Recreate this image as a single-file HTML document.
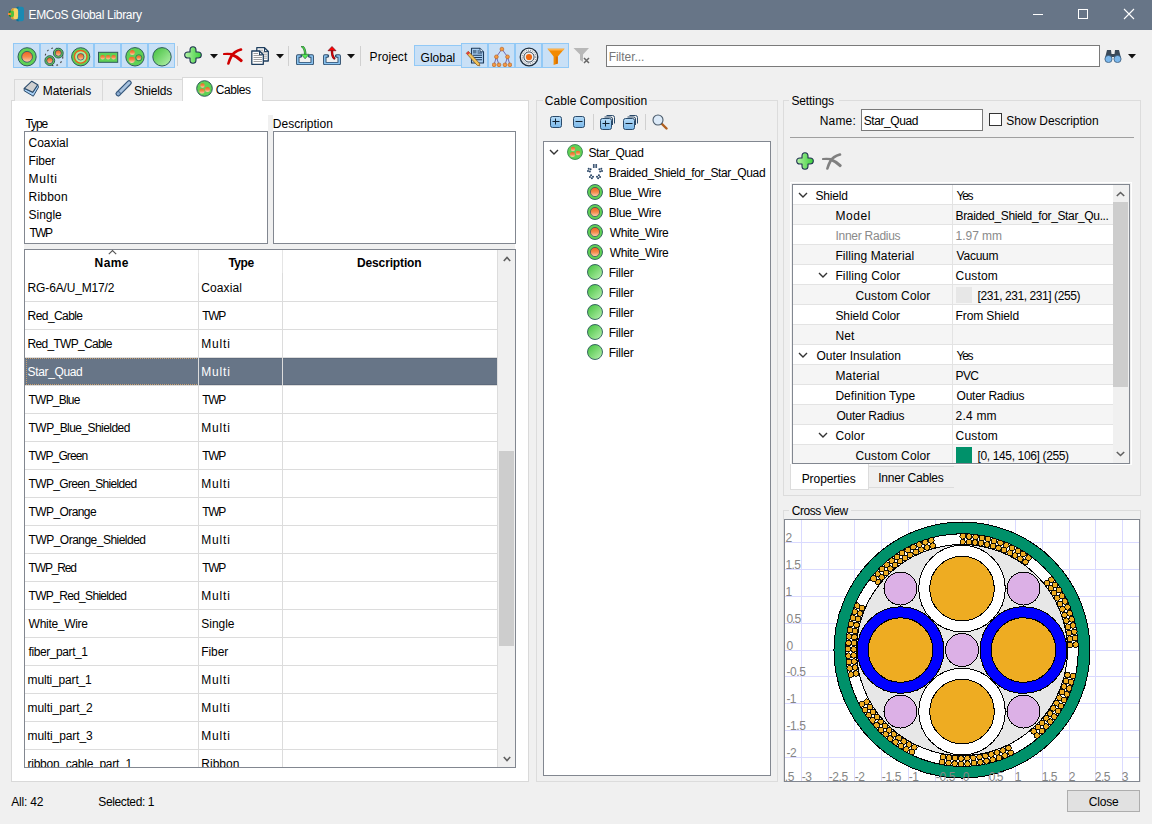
<!DOCTYPE html><html><head><meta charset="utf-8"><style>
html,body{margin:0;padding:0;}
body{width:1152px;height:824px;position:relative;overflow:hidden;background:#f0f0f0;font-family:"Liberation Sans", sans-serif;font-size:12px;color:#000;}
.t{position:absolute;white-space:nowrap;line-height:14px;}
svg{display:block}

</style></head><body>
<svg width="0" height="0" style="position:absolute">
<defs>
<linearGradient id="gOr" x1="0" y1="0" x2="0" y2="1"><stop offset="0" stop-color="#ec6420"/><stop offset="0.5" stop-color="#f48a4a"/><stop offset="1" stop-color="#fcd2b4"/></linearGradient>
<linearGradient id="gGr2" x1="0" y1="0" x2="1" y2="1"><stop offset="0" stop-color="#3fbf3a"/><stop offset="1" stop-color="#b9f2b0"/></linearGradient>
<linearGradient id="gPlus" x1="0" y1="0" x2="1" y2="0"><stop offset="0" stop-color="#b4f2a6"/><stop offset="1" stop-color="#3ccf3c"/></linearGradient>
<linearGradient id="gBl" x1="0" y1="0" x2="0" y2="1"><stop offset="0" stop-color="#b5dbf7"/><stop offset="1" stop-color="#7ab8ea"/></linearGradient>
</defs></svg>
<div style="position:absolute;left:0px;top:0px;width:1152px;height:30px;background:#677587"></div>
<svg style="position:absolute;left:8px;top:6px;" width="17" height="16" viewBox="0 0 17 16"><path d="M10 0.7 L13.5 0.7 Q16 0.7 16 4 L16 12 Q16 15.2 13.5 15.2 L10 15.2 Q8 15.2 8 12 L8 4 Q8 0.7 10 0.7 Z" fill="#1a8ab2"/>
<path d="M10 0.7 Q8 0.7 8 4 L8 12 Q8 15.2 10 15.2 L10.8 15.2 Q9.5 13 9.5 8 Q9.5 3 10.8 0.7 Z" fill="#0f6e92"/>
<path d="M5 2.3 L8.5 2.3 Q10.1 2.3 10.1 5 L10.1 10.6 Q10.1 13.3 8.5 13.3 L5 13.3 Q3.2 13.3 3.2 10.6 L3.2 5 Q3.2 2.3 5 2.3 Z" fill="#f6d466"/>
<path d="M5 2.3 Q3.2 2.3 3.2 5 L3.2 10.6 Q3.2 13.3 5 13.3 L6 13.3 Q5 11 5 7.8 Q5 4.5 6 2.3 Z" fill="#d8982e"/>
<path d="M2.5 4.7 L5 4.7 Q6 4.7 6 7 L6 8.8 Q6 10.9 5 10.9 L2.5 10.9 Q0.8 10.9 0.8 8.8 L0.8 7 Q0.8 4.7 2.5 4.7 Z" fill="#52c03e"/>
<path d="M2.5 4.7 Q0.8 4.7 0.8 7 L0.8 8.8 Q0.8 10.9 2.5 10.9 L3 10.9 Q2.2 9.5 2.2 7.8 Q2.2 6 3 4.7 Z" fill="#1e7a22"/>
<rect x="0" y="6.9" width="3.1" height="2.1" fill="#f28a30"/></svg>
<div class="t" style="left:28.50px;top:8px;letter-spacing:-0.316px;color:#fff">EMCoS Global Library</div>
<div style="position:absolute;left:1033px;top:14px;width:10px;height:1px;background:#fff"></div>
<div style="position:absolute;left:1078px;top:9px;width:10px;height:10px;border:1px solid #fff;box-sizing:border-box"></div>
<svg style="position:absolute;left:1123px;top:8px;" width="12" height="12" viewBox="0 0 12 12"><path d="M1 1 L11 11 M11 1 L1 11" stroke="#fff" stroke-width="1.1"/></svg>
<div style="position:absolute;left:13px;top:43px;width:162px;height:25px;background:#c9e0f6;border:1px solid #92c9f6;box-sizing:border-box"></div>
<div style="position:absolute;left:39px;top:43px;width:2px;height:25px;background:#92c9f6"></div>
<div style="position:absolute;left:66px;top:43px;width:2px;height:25px;background:#92c9f6"></div>
<div style="position:absolute;left:93px;top:43px;width:2px;height:25px;background:#92c9f6"></div>
<div style="position:absolute;left:120px;top:43px;width:2px;height:25px;background:#92c9f6"></div>
<div style="position:absolute;left:147px;top:43px;width:2px;height:25px;background:#92c9f6"></div>
<svg style="position:absolute;left:17px;top:47px;" width="20" height="20" viewBox="0 0 20 20"><circle cx="10.1" cy="9.8" r="9.1" fill="#5fd155" stroke="#2d5a5a" stroke-width="1"/><circle cx="10.1" cy="9.8" r="5.4" fill="url(#gOr)" stroke="#2d4a6a" stroke-width="0.8"/></svg>
<svg style="position:absolute;left:44px;top:47px;" width="20" height="20" viewBox="0 0 20 20"><circle cx="10" cy="9.8" r="8.8" fill="none" stroke="#444" stroke-width="1.1" stroke-dasharray="1.8 3"/><circle cx="14.3" cy="6.1" r="4.9" fill="#5fd155" stroke="#2d5a5a" stroke-width="1"/><circle cx="14.3" cy="6.1" r="3.1" fill="url(#gOr)" stroke="#2d4a6a" stroke-width="0.8"/><circle cx="5.8" cy="13.6" r="4.9" fill="#5fd155" stroke="#2d5a5a" stroke-width="1"/><circle cx="5.8" cy="13.6" r="3.1" fill="url(#gOr)" stroke="#2d4a6a" stroke-width="0.8"/></svg>
<svg style="position:absolute;left:71px;top:47px;" width="20" height="20" viewBox="0 0 20 20"><circle cx="9.7" cy="9.8" r="9.1" fill="#5fd155" stroke="#2d5a5a" stroke-width="1"/><circle cx="9.7" cy="9.8" r="6.3" fill="#a8f0a0" stroke="#e8601a" stroke-width="1.4"/><circle cx="9.7" cy="9.8" r="3.3" fill="url(#gOr)" stroke="#2d4a6a" stroke-width="0.7"/></svg>
<svg style="position:absolute;left:98px;top:51px;" width="21" height="13" viewBox="0 0 21 13"><rect x="0.5" y="1.3" width="19.2" height="10" fill="#5fd155" stroke="#2d5a5a" stroke-width="1"/><circle cx="4.6" cy="6.3" r="2.3" fill="url(#gOr)"/><circle cx="10.1" cy="6.3" r="2.3" fill="url(#gOr)"/><circle cx="15.6" cy="6.3" r="2.3" fill="url(#gOr)"/></svg>
<svg style="position:absolute;left:125px;top:47px;" width="20" height="20" viewBox="0 0 20 20"><circle cx="10" cy="9.8" r="9.2" fill="#5fd155" stroke="#2d5a5a" stroke-width="1"/><circle cx="7.3" cy="5.6" r="2.5" fill="url(#gOr)"/><circle cx="6.8" cy="12.8" r="3.1" fill="url(#gOr)"/><circle cx="13.8" cy="10.8" r="3.1" fill="#5fd155" stroke="#2d5a5a" stroke-width="0.7"/><circle cx="13.8" cy="10.8" r="2.2" fill="url(#gOr)"/></svg>
<svg style="position:absolute;left:152px;top:47px;" width="20" height="20" viewBox="0 0 20 20"><circle cx="10" cy="9.8" r="9.2" fill="url(#gGr2)" stroke="#2d5a5a" stroke-width="1"/></svg>
<div style="position:absolute;left:177px;top:46px;width:1px;height:20px;background:#d0d0d0"></div>
<svg style="position:absolute;left:184px;top:46px;" width="18" height="18" viewBox="0 0 18 18"><path d="M6 4 Q6 0.7 9 0.7 Q12 0.7 12 4 L12 6 L14 6 Q17.3 6 17.3 9 Q17.3 12 14 12 L12 12 L12 14 Q12 17.3 9 17.3 Q6 17.3 6 14 L6 12 L4 12 Q0.7 12 0.7 9 Q0.7 6 4 6 L6 6 Z" fill="url(#gPlus)" stroke="#1e3050" stroke-width="1.1" stroke-linejoin="round"/></svg>
<svg style="position:absolute;left:210px;top:54px;" width="8" height="5" viewBox="0 0 8 5"><path d="M0 0 L8 0 L4 4.5 Z" fill="#111"/></svg>
<svg style="position:absolute;left:223px;top:46px;" width="20" height="19" viewBox="0 0 20 19"><path d="M1 8 Q5 7.6 9.5 8.2" stroke="#d00000" stroke-width="2.2" fill="none" stroke-linecap="round"/><path d="M18 3.5 Q11 5.5 8.5 10 Q6.5 13.5 5.4 17.5" stroke="#d00000" stroke-width="2.6" fill="none" stroke-linecap="round"/><path d="M9 8.6 Q14 10.5 18.2 14.6" stroke="#d00000" stroke-width="2.9" fill="none" stroke-linecap="round"/></svg>
<svg style="position:absolute;left:250px;top:46px;" width="20" height="20" viewBox="0 0 20 20"><path d="M6.8 1.7 L14.5 1.7 L18.3 5.5 L18.3 15 L6.8 15 Z" fill="#fff" stroke="#1e3e5e" stroke-width="1.3" stroke-linejoin="round"/><path d="M14.5 1.7 L14.5 5.5 L18.3 5.5" fill="none" stroke="#1e3e5e" stroke-width="1.1"/><path d="M8.5 4.2 H13 M8.5 6.2 H17 M8.5 8.2 H17 M8.5 10.2 H17 M8.5 12.2 H17" stroke="#888" stroke-width="0.8"/><path d="M1.8 5 L9.5 5 L13.3 8.8 L13.3 18.3 L1.8 18.3 Z" fill="#fff" stroke="#1e3e5e" stroke-width="1.3" stroke-linejoin="round"/><path d="M9.5 5 L9.5 8.8 L13.3 8.8" fill="none" stroke="#1e3e5e" stroke-width="1.1"/><path d="M3.5 7.5 H8 M3.5 9.5 H12 M3.5 11.5 H12 M3.5 13.5 H12 M3.5 15.5 H12" stroke="#888" stroke-width="0.8"/></svg>
<svg style="position:absolute;left:276px;top:54px;" width="8" height="5" viewBox="0 0 8 5"><path d="M0 0 L8 0 L4 4.5 Z" fill="#111"/></svg>
<div style="position:absolute;left:288px;top:46px;width:1px;height:20px;background:#d0d0d0"></div>
<svg style="position:absolute;left:296px;top:46px;" width="18" height="19" viewBox="0 0 18 19"><path d="M4.5 10 L1.8 10 L1.8 17.6 L16.2 17.6 L16.2 10 L13.5 10" fill="none" stroke="#2a4a6a" stroke-width="3.4" stroke-linejoin="round" stroke-linecap="round"/><path d="M4.5 10 L1.8 10 L1.8 17.6 L16.2 17.6 L16.2 10 L13.5 10" fill="none" stroke="#8ec8f5" stroke-width="1.5" stroke-linejoin="round" stroke-linecap="butt"/><path d="M6.3 0.6 Q9.3 2.5 9.2 8.8" fill="none" stroke="#2a7a3a" stroke-width="2.4" stroke-linecap="round"/><path d="M6.3 0.6 Q9.3 2.5 9.2 8.8" fill="none" stroke="#4ec84a" stroke-width="1.3"/><path d="M5.2 8.3 L13 8.3 L9.1 12.8 Z" fill="#55f055" stroke="#2a6a3a" stroke-width="0.7" stroke-linejoin="round"/></svg>
<svg style="position:absolute;left:323px;top:46px;" width="18" height="19" viewBox="0 0 18 19"><path d="M4.5 10 L1.8 10 L1.8 17.6 L16.2 17.6 L16.2 10 L13.5 10" fill="none" stroke="#2a4a6a" stroke-width="3.4" stroke-linejoin="round" stroke-linecap="round"/><path d="M4.5 10 L1.8 10 L1.8 17.6 L16.2 17.6 L16.2 10 L13.5 10" fill="none" stroke="#8ec8f5" stroke-width="1.5" stroke-linejoin="round" stroke-linecap="butt"/><path d="M9 4.5 Q8.8 10 11.3 12.5" fill="none" stroke="#6a1020" stroke-width="2.4" stroke-linecap="round"/><path d="M9 4.5 Q8.8 10 11.3 12.5" fill="none" stroke="#e00000" stroke-width="1.3"/><path d="M5 4.7 L13 4.7 L9 0.5 Z" fill="#ff0000" stroke="#6a1020" stroke-width="0.7" stroke-linejoin="round"/></svg>
<svg style="position:absolute;left:347px;top:54px;" width="8" height="5" viewBox="0 0 8 5"><path d="M0 0 L8 0 L4 4.5 Z" fill="#111"/></svg>
<div style="position:absolute;left:360px;top:46px;width:1px;height:20px;background:#d0d0d0"></div>
<div class="t" style="left:369.60px;top:50px;letter-spacing:0.050px;">Project</div>
<div style="position:absolute;left:414px;top:45px;width:48px;height:21px;background:#c9e0f6;border:1px solid #92c9f6;box-sizing:border-box"></div>
<div class="t" style="left:420.60px;top:51px;letter-spacing:0.000px;">Global</div>
<div style="position:absolute;left:461px;top:43px;width:108px;height:25px;background:#c9e0f6;border:1px solid #92c9f6;box-sizing:border-box"></div>
<div style="position:absolute;left:487px;top:43px;width:2px;height:25px;background:#92c9f6"></div>
<div style="position:absolute;left:514px;top:43px;width:2px;height:25px;background:#92c9f6"></div>
<div style="position:absolute;left:541px;top:43px;width:2px;height:25px;background:#92c9f6"></div>
<svg style="position:absolute;left:465px;top:46px;" width="20" height="21" viewBox="0 0 20 21"><path d="M6.5 2.3 L15 2.3 L18.5 5.8 L18.5 17 L6.5 17 Z" fill="#a9cdf0" stroke="#1e3a5a" stroke-width="1.1" stroke-linejoin="round"/><path d="M15 2.3 L15 5.8 L18.5 5.8" fill="#dbe9f7" stroke="#1e3a5a" stroke-width="0.9"/><rect x="8" y="4" width="3.5" height="3.5" fill="#5a7a9a"/><path d="M12.5 5 H14 M12.5 7 H17 M8 9.3 H17 M8 11.5 H17 M8 13.7 H17" stroke="#1e3a5a" stroke-width="1.1"/><path d="M1.3 7.3 L3.3 5.3 L14.3 17.2 L14.8 19.8 L12.2 19.3 Z" fill="#f2c45a" stroke="#8a5a20" stroke-width="0.8" stroke-linejoin="round"/><path d="M1.3 7.3 L3.3 5.3 L4.8 6.9 L2.8 8.9 Z" fill="#e03c3c"/></svg>
<svg style="position:absolute;left:492px;top:46px;" width="20" height="21" viewBox="0 0 20 21"><path d="M9.9 3.1 L4.4 10.8 L2 18.9 M4.4 10.8 L7 18.9 M9.9 3.1 L15.5 10.8 L13 18.9 M15.5 10.8 L18 18.9" stroke="#6a5aa8" stroke-width="0.9" fill="none"/><circle cx="9.9" cy="3.1" r="1.9" fill="#f59a40" stroke="#b05a20" stroke-width="0.6"/><circle cx="4.4" cy="10.8" r="1.9" fill="#f59a40" stroke="#b05a20" stroke-width="0.6"/><circle cx="15.5" cy="10.8" r="1.9" fill="#f59a40" stroke="#b05a20" stroke-width="0.6"/><circle cx="2.1" cy="18.8" r="1.9" fill="#f59a40" stroke="#b05a20" stroke-width="0.6"/><circle cx="7" cy="18.8" r="1.9" fill="#f59a40" stroke="#b05a20" stroke-width="0.6"/><circle cx="13" cy="18.8" r="1.9" fill="#f59a40" stroke="#b05a20" stroke-width="0.6"/><circle cx="17.9" cy="18.8" r="1.9" fill="#f59a40" stroke="#b05a20" stroke-width="0.6"/></svg>
<svg style="position:absolute;left:519px;top:47px;" width="20" height="20" viewBox="0 0 20 20"><circle cx="10" cy="10" r="8.8" fill="#f2f4f6" stroke="#1e2e3e" stroke-width="1.3"/><circle cx="10" cy="10" r="6.8" fill="none" stroke="#2a3a4a" stroke-width="0.7" stroke-dasharray="1 1.2"/><circle cx="10" cy="10" r="5.1" fill="#f0f0f0" stroke="#2a3a4a" stroke-width="0.9"/><circle cx="10" cy="10" r="3.1" fill="#ef6a12"/></svg>
<svg style="position:absolute;left:546px;top:47px;" width="20" height="19" viewBox="0 0 20 19"><path d="M1.5 1.8 L18.5 1.8 L11.8 9.5 L11.8 16.5 L7.6 18 L7.6 9.5 Z" fill="#f28a00"/><path d="M1.5 1.8 L18.5 1.8 L17 3.6 L3 3.6 Z" fill="#ffb24a"/><path d="M9.7 9.5 L11.8 9.5 L11.8 16.5 L9.7 17.3 Z" fill="#d87000"/></svg>
<svg style="position:absolute;left:573px;top:47px;" width="18" height="18" viewBox="0 0 18 18"><path d="M0.5 1 L16 1 L10 7.5 L10 15 L7 13 L7 7.5 Z" fill="#b8b8b8"/><path d="M11 11 L16 16 M16 11 L11 16" stroke="#666" stroke-width="1.5"/></svg>
<div style="position:absolute;left:606px;top:45px;width:494px;height:22px;background:#fff;border:1px solid #7a7a7a;box-sizing:border-box"></div>
<div class="t" style="left:608.70px;top:50px;letter-spacing:-0.038px;color:#777">Filter...</div>
<svg style="position:absolute;left:1104px;top:49px;" width="18" height="14" viewBox="0 0 18 14"><path d="M3 1 L7 1 L8 9 L1 9 Z" fill="#3a4a5a"/><path d="M11 1 L15 1 L17 9 L10 9 Z" fill="#3a4a5a"/><rect x="7" y="5" width="4" height="3" fill="#3a4a5a"/><circle cx="4.5" cy="10" r="3.6" fill="#7cb8ec" stroke="#3a5a7a" stroke-width="0.8"/><circle cx="13.5" cy="10" r="3.6" fill="#7cb8ec" stroke="#3a5a7a" stroke-width="0.8"/></svg>
<svg style="position:absolute;left:1128px;top:54px;" width="8" height="5" viewBox="0 0 8 5"><path d="M0 0 L8 0 L4 4.5 Z" fill="#111"/></svg>
<div style="position:absolute;left:11px;top:100px;width:518px;height:682px;background:#fff;border:1px solid #d9d9d9;box-sizing:border-box"></div>
<div style="position:absolute;left:14px;top:79px;width:89px;height:22px;background:#f0f0f0;border:1px solid #d9d9d9;border-bottom:none;box-sizing:border-box"></div>
<div style="position:absolute;left:102px;top:79px;width:81px;height:22px;background:#f0f0f0;border:1px solid #d9d9d9;border-bottom:none;box-sizing:border-box"></div>
<div style="position:absolute;left:182px;top:77px;width:81px;height:24px;background:#fff;border:1px solid #d9d9d9;border-bottom:none;box-sizing:border-box"></div>
<div style="position:absolute;left:183px;top:99px;width:79px;height:3px;background:#fff"></div>
<svg style="position:absolute;left:23px;top:80px;" width="17" height="18" viewBox="0 0 17 18"><path d="M1.2 8.3 L1.2 10.8 L10.3 16.2 L15.5 7.2 L14.7 4.7 L9.8 12.3 Z" fill="#a8d0f5" stroke="#2a4a6a" stroke-width="1" stroke-linejoin="round"/><path d="M1.2 8.3 L8.8 1.2 L14.7 4.7 L9.8 12.3 Z" fill="#d0d0d0" stroke="#2a4a6a" stroke-width="1.1" stroke-linejoin="round"/></svg>
<div class="t" style="left:42.70px;top:84px;letter-spacing:-0.025px;">Materials</div>
<svg style="position:absolute;left:114px;top:80px;" width="18" height="18" viewBox="0 0 18 18"><path d="M4.3 13.7 L15.1 2.8" stroke="#34567a" stroke-width="5.2" stroke-linecap="round"/><path d="M4.3 13.7 L15.1 2.8" stroke="#a9c3df" stroke-width="3" stroke-linecap="round"/><circle cx="4.3" cy="13.7" r="2.1" fill="#8eaed2" stroke="#34567a" stroke-width="0.9"/></svg>
<div class="t" style="left:134.00px;top:84px;letter-spacing:-0.167px;">Shields</div>
<svg style="position:absolute;left:196px;top:80px;" width="17" height="17" viewBox="0 0 17 17"><circle cx="8.5" cy="8.5" r="7.8" fill="#5fd155" stroke="#2d5a5a" stroke-width="1"/><circle cx="6.5" cy="5.5" r="2.2" fill="url(#gOr)"/><circle cx="6" cy="11" r="2.6" fill="url(#gOr)"/><circle cx="11.5" cy="9.5" r="2.5" fill="url(#gOr)"/></svg>
<div class="t" style="left:215.70px;top:83px;letter-spacing:-0.400px;">Cables</div>
<div class="t" style="left:25.50px;top:117px;letter-spacing:-1.133px;">Type</div>
<div class="t" style="left:272.80px;top:117px;letter-spacing:0.000px;">Description</div>
<div style="position:absolute;left:268px;top:115px;width:5px;height:128px;background:#f0f0f0"></div>
<div style="position:absolute;left:24px;top:243px;width:491px;height:6px;background:#f0f0f0"></div>
<div style="position:absolute;left:24px;top:131px;width:244px;height:113px;background:#fff;border:1px solid #828790;box-sizing:border-box"></div>
<div style="position:absolute;left:273px;top:131px;width:243px;height:113px;background:#fff;border:1px solid #828790;box-sizing:border-box"></div>
<div class="t" style="left:28.50px;top:136px;letter-spacing:-0.017px;">Coaxial</div>
<div class="t" style="left:28.50px;top:154px;letter-spacing:-0.125px;">Fiber</div>
<div class="t" style="left:28.50px;top:172px;letter-spacing:0.775px;">Multi</div>
<div class="t" style="left:28.50px;top:190px;letter-spacing:0.220px;">Ribbon</div>
<div class="t" style="left:28.50px;top:208px;letter-spacing:-0.020px;">Single</div>
<div class="t" style="left:29.50px;top:226px;letter-spacing:-1.550px;">TWP</div>
<div style="position:absolute;left:24px;top:249px;width:492px;height:519px;background:#fff;border:1px solid #828790;box-sizing:border-box"></div>
<div style="position:absolute;left:198px;top:250px;width:1px;height:23px;background:#e5e5e5"></div>
<div style="position:absolute;left:282px;top:250px;width:1px;height:23px;background:#e5e5e5"></div>
<div class="t" style="left:94.60px;top:256px;letter-spacing:0.400px;font-weight:700;">Name</div>
<div class="t" style="left:228.40px;top:256px;letter-spacing:-0.467px;font-weight:700;">Type</div>
<div class="t" style="left:357.00px;top:256px;letter-spacing:-0.140px;font-weight:700;">Description</div>
<svg style="position:absolute;left:108px;top:249px;" width="9" height="6" viewBox="0 0 9 6"><path d="M0.8 5.2 L4.5 1.5 L8.2 5.2" stroke="#555" fill="none" stroke-width="1.1"/></svg>
<div style="position:absolute;left:25px;top:273px;width:473px;height:494px;overflow:hidden">
<div style="position:absolute;left:0px;top:28px;width:473px;height:1px;background:#dcdcdc"></div>
<div style="position:absolute;left:173px;top:0px;width:1px;height:29px;background:#dcdcdc"></div>
<div style="position:absolute;left:257px;top:0px;width:1px;height:29px;background:#dcdcdc"></div>
<div class="t" style="left:2.60px;top:8px;letter-spacing:-0.154px;">RG-6A/U_M17/2</div>
<div class="t" style="left:176.30px;top:8px;letter-spacing:0.100px;">Coaxial</div>
<div style="position:absolute;left:0px;top:56px;width:473px;height:1px;background:#dcdcdc"></div>
<div style="position:absolute;left:173px;top:28px;width:1px;height:29px;background:#dcdcdc"></div>
<div style="position:absolute;left:257px;top:28px;width:1px;height:29px;background:#dcdcdc"></div>
<div class="t" style="left:2.60px;top:36px;letter-spacing:-0.575px;">Red_Cable</div>
<div class="t" style="left:177.30px;top:36px;letter-spacing:-1.400px;">TWP</div>
<div style="position:absolute;left:0px;top:84px;width:473px;height:1px;background:#dcdcdc"></div>
<div style="position:absolute;left:173px;top:56px;width:1px;height:29px;background:#dcdcdc"></div>
<div style="position:absolute;left:257px;top:56px;width:1px;height:29px;background:#dcdcdc"></div>
<div class="t" style="left:2.60px;top:64px;letter-spacing:-0.708px;">Red_TWP_Cable</div>
<div class="t" style="left:176.30px;top:64px;letter-spacing:0.825px;">Multi</div>
<div style="position:absolute;left:0px;top:85px;width:473px;height:27px;background:#677587"></div>
<div style="position:absolute;left:0px;top:85px;width:473px;height:1px;background:#5d6a7c"></div>
<div style="position:absolute;left:0px;top:111px;width:473px;height:1px;background:#5d6a7c"></div>
<div style="position:absolute;left:1px;top:85px;width:171px;height:25px;border:1px dotted #c8a070;box-sizing:content-box"></div>
<div style="position:absolute;left:0px;top:112px;width:473px;height:1px;background:#dcdcdc"></div>
<div style="position:absolute;left:173px;top:84px;width:1px;height:29px;background:#dcdcdc"></div>
<div style="position:absolute;left:257px;top:84px;width:1px;height:29px;background:#dcdcdc"></div>
<div class="t" style="left:2.60px;top:92px;letter-spacing:-0.356px;color:#fff;">Star_Quad</div>
<div class="t" style="left:176.30px;top:92px;letter-spacing:0.825px;color:#fff;">Multi</div>
<div style="position:absolute;left:0px;top:140px;width:473px;height:1px;background:#dcdcdc"></div>
<div style="position:absolute;left:173px;top:112px;width:1px;height:29px;background:#dcdcdc"></div>
<div style="position:absolute;left:257px;top:112px;width:1px;height:29px;background:#dcdcdc"></div>
<div class="t" style="left:3.60px;top:120px;letter-spacing:-0.800px;">TWP_Blue</div>
<div class="t" style="left:177.30px;top:120px;letter-spacing:-1.400px;">TWP</div>
<div style="position:absolute;left:0px;top:168px;width:473px;height:1px;background:#dcdcdc"></div>
<div style="position:absolute;left:173px;top:140px;width:1px;height:29px;background:#dcdcdc"></div>
<div style="position:absolute;left:257px;top:140px;width:1px;height:29px;background:#dcdcdc"></div>
<div class="t" style="left:3.60px;top:148px;letter-spacing:-0.562px;">TWP_Blue_Shielded</div>
<div class="t" style="left:176.30px;top:148px;letter-spacing:0.825px;">Multi</div>
<div style="position:absolute;left:0px;top:196px;width:473px;height:1px;background:#dcdcdc"></div>
<div style="position:absolute;left:173px;top:168px;width:1px;height:29px;background:#dcdcdc"></div>
<div style="position:absolute;left:257px;top:168px;width:1px;height:29px;background:#dcdcdc"></div>
<div class="t" style="left:3.60px;top:176px;letter-spacing:-0.888px;">TWP_Green</div>
<div class="t" style="left:177.30px;top:176px;letter-spacing:-1.400px;">TWP</div>
<div style="position:absolute;left:0px;top:224px;width:473px;height:1px;background:#dcdcdc"></div>
<div style="position:absolute;left:173px;top:196px;width:1px;height:29px;background:#dcdcdc"></div>
<div style="position:absolute;left:257px;top:196px;width:1px;height:29px;background:#dcdcdc"></div>
<div class="t" style="left:3.60px;top:204px;letter-spacing:-0.676px;">TWP_Green_Shielded</div>
<div class="t" style="left:176.30px;top:204px;letter-spacing:0.825px;">Multi</div>
<div style="position:absolute;left:0px;top:252px;width:473px;height:1px;background:#dcdcdc"></div>
<div style="position:absolute;left:173px;top:224px;width:1px;height:29px;background:#dcdcdc"></div>
<div style="position:absolute;left:257px;top:224px;width:1px;height:29px;background:#dcdcdc"></div>
<div class="t" style="left:3.60px;top:232px;letter-spacing:-0.594px;">TWP_Orange</div>
<div class="t" style="left:177.30px;top:232px;letter-spacing:-1.400px;">TWP</div>
<div style="position:absolute;left:0px;top:280px;width:473px;height:1px;background:#dcdcdc"></div>
<div style="position:absolute;left:173px;top:252px;width:1px;height:29px;background:#dcdcdc"></div>
<div style="position:absolute;left:257px;top:252px;width:1px;height:29px;background:#dcdcdc"></div>
<div class="t" style="left:3.60px;top:260px;letter-spacing:-0.519px;">TWP_Orange_Shielded</div>
<div class="t" style="left:176.30px;top:260px;letter-spacing:0.825px;">Multi</div>
<div style="position:absolute;left:0px;top:308px;width:473px;height:1px;background:#dcdcdc"></div>
<div style="position:absolute;left:173px;top:280px;width:1px;height:29px;background:#dcdcdc"></div>
<div style="position:absolute;left:257px;top:280px;width:1px;height:29px;background:#dcdcdc"></div>
<div class="t" style="left:3.60px;top:288px;letter-spacing:-1.183px;">TWP_Red</div>
<div class="t" style="left:177.30px;top:288px;letter-spacing:-1.400px;">TWP</div>
<div style="position:absolute;left:0px;top:336px;width:473px;height:1px;background:#dcdcdc"></div>
<div style="position:absolute;left:173px;top:308px;width:1px;height:29px;background:#dcdcdc"></div>
<div style="position:absolute;left:257px;top:308px;width:1px;height:29px;background:#dcdcdc"></div>
<div class="t" style="left:3.60px;top:316px;letter-spacing:-0.690px;">TWP_Red_Shielded</div>
<div class="t" style="left:176.30px;top:316px;letter-spacing:0.825px;">Multi</div>
<div style="position:absolute;left:0px;top:364px;width:473px;height:1px;background:#dcdcdc"></div>
<div style="position:absolute;left:173px;top:336px;width:1px;height:29px;background:#dcdcdc"></div>
<div style="position:absolute;left:257px;top:336px;width:1px;height:29px;background:#dcdcdc"></div>
<div class="t" style="left:3.60px;top:344px;letter-spacing:-0.289px;">White_Wire</div>
<div class="t" style="left:176.30px;top:344px;letter-spacing:-0.040px;">Single</div>
<div style="position:absolute;left:0px;top:392px;width:473px;height:1px;background:#dcdcdc"></div>
<div style="position:absolute;left:173px;top:364px;width:1px;height:29px;background:#dcdcdc"></div>
<div style="position:absolute;left:257px;top:364px;width:1px;height:29px;background:#dcdcdc"></div>
<div class="t" style="left:3.60px;top:372px;letter-spacing:-0.418px;">fiber_part_1</div>
<div class="t" style="left:176.30px;top:372px;letter-spacing:-0.100px;">Fiber</div>
<div style="position:absolute;left:0px;top:420px;width:473px;height:1px;background:#dcdcdc"></div>
<div style="position:absolute;left:173px;top:392px;width:1px;height:29px;background:#dcdcdc"></div>
<div style="position:absolute;left:257px;top:392px;width:1px;height:29px;background:#dcdcdc"></div>
<div class="t" style="left:2.60px;top:400px;letter-spacing:-0.168px;">multi_part_1</div>
<div class="t" style="left:176.30px;top:400px;letter-spacing:0.825px;">Multi</div>
<div style="position:absolute;left:0px;top:448px;width:473px;height:1px;background:#dcdcdc"></div>
<div style="position:absolute;left:173px;top:420px;width:1px;height:29px;background:#dcdcdc"></div>
<div style="position:absolute;left:257px;top:420px;width:1px;height:29px;background:#dcdcdc"></div>
<div class="t" style="left:2.60px;top:428px;letter-spacing:-0.077px;">multi_part_2</div>
<div class="t" style="left:176.30px;top:428px;letter-spacing:0.825px;">Multi</div>
<div style="position:absolute;left:0px;top:476px;width:473px;height:1px;background:#dcdcdc"></div>
<div style="position:absolute;left:173px;top:448px;width:1px;height:29px;background:#dcdcdc"></div>
<div style="position:absolute;left:257px;top:448px;width:1px;height:29px;background:#dcdcdc"></div>
<div class="t" style="left:2.60px;top:456px;letter-spacing:-0.077px;">multi_part_3</div>
<div class="t" style="left:176.30px;top:456px;letter-spacing:0.825px;">Multi</div>
<div style="position:absolute;left:0px;top:504px;width:473px;height:1px;background:#dcdcdc"></div>
<div style="position:absolute;left:173px;top:476px;width:1px;height:29px;background:#dcdcdc"></div>
<div style="position:absolute;left:257px;top:476px;width:1px;height:29px;background:#dcdcdc"></div>
<div class="t" style="left:2.60px;top:484px;letter-spacing:-0.272px;">ribbon_cable_part_1</div>
<div class="t" style="left:176.30px;top:484px;letter-spacing:0.000px;">Ribbon</div>
</div>
<div style="position:absolute;left:498px;top:250px;width:17px;height:517px;background:#f0f0f0"></div>
<div style="position:absolute;left:497px;top:250px;width:1px;height:517px;background:#dcdcdc"></div>
<div style="position:absolute;left:499px;top:451px;width:15px;height:195px;background:#cdcdcd"></div>
<svg style="position:absolute;left:503px;top:256px;" width="8" height="6" viewBox="0 0 8 6"><path d="M0.8 5 L4 1.5 L7.2 5" stroke="#606060" fill="none" stroke-width="1.6"/></svg>
<svg style="position:absolute;left:503px;top:756px;" width="8" height="6" viewBox="0 0 8 6"><path d="M0.8 1 L4 4.5 L7.2 1" stroke="#606060" fill="none" stroke-width="1.6"/></svg>
<div class="t" style="left:11.25px;top:795px;letter-spacing:-0.208px;">All: 42</div>
<div class="t" style="left:98.25px;top:795px;letter-spacing:-0.375px;">Selected: 1</div>
<div style="position:absolute;left:536px;top:100px;width:242px;height:682px;border:1px solid #dcdcdc;box-sizing:border-box"></div>
<div style="position:absolute;left:543px;top:92px;width:106px;height:16px;background:#f0f0f0"></div>
<div class="t" style="left:544.70px;top:94px;letter-spacing:0.069px;">Cable Composition</div>
<svg style="position:absolute;left:550px;top:116px;" width="12" height="12" viewBox="0 0 12 12"><rect x="0.5" y="0.5" width="11" height="11" rx="2" fill="url(#gBl)" stroke="#2a4a6a" stroke-width="1"/><path d="M2.5 5.5 H9.5" stroke="#102030" stroke-width="1"/><path d="M5.5 2.5 V8.5" stroke="#102030" stroke-width="1"/></svg>
<svg style="position:absolute;left:573px;top:116px;" width="12" height="12" viewBox="0 0 12 12"><rect x="0.5" y="0.5" width="11" height="11" rx="2" fill="url(#gBl)" stroke="#2a4a6a" stroke-width="1"/><path d="M2.5 5.5 H9.5" stroke="#102030" stroke-width="1"/></svg>
<div style="position:absolute;left:593px;top:114px;width:1px;height:16px;background:#d0d0d0"></div>
<svg style="position:absolute;left:600px;top:114px;" width="16" height="16" viewBox="0 0 16 16"><path d="M6.5 1.5 L12.5 1.5 Q14.5 1.5 14.5 3.5 L14.5 9.5" fill="none" stroke="#2a4a6a" stroke-width="1"/><path d="M4.5 3 L10.5 3 Q12.5 3 12.5 5 L12.5 11" fill="none" stroke="#2a4a6a" stroke-width="1"/><rect x="0.5" y="4.5" width="11" height="11" rx="2" fill="url(#gBl)" stroke="#2a4a6a" stroke-width="1"/><path d="M2.5 9.5 H9.5" stroke="#102030" stroke-width="1"/><path d="M5.5 6.5 V12.5" stroke="#102030" stroke-width="1"/></svg>
<svg style="position:absolute;left:623px;top:114px;" width="16" height="16" viewBox="0 0 16 16"><path d="M6.5 1.5 L12.5 1.5 Q14.5 1.5 14.5 3.5 L14.5 9.5" fill="none" stroke="#2a4a6a" stroke-width="1"/><path d="M4.5 3 L10.5 3 Q12.5 3 12.5 5 L12.5 11" fill="none" stroke="#2a4a6a" stroke-width="1"/><rect x="0.5" y="4.5" width="11" height="11" rx="2" fill="url(#gBl)" stroke="#2a4a6a" stroke-width="1"/><path d="M2.5 9.5 H9.5" stroke="#102030" stroke-width="1"/></svg>
<div style="position:absolute;left:645px;top:114px;width:1px;height:16px;background:#d0d0d0"></div>
<svg style="position:absolute;left:652px;top:114px;" width="16" height="16" viewBox="0 0 16 16"><path d="M9 9 L14.5 14.5" stroke="#b06020" stroke-width="2.4" stroke-linecap="round"/><circle cx="6" cy="6" r="5" fill="#dceaf8" stroke="#4a5a6a" stroke-width="1.1"/></svg>
<div style="position:absolute;left:543px;top:141px;width:228px;height:635px;background:#fff;border:1px solid #828790;box-sizing:border-box"></div>
<svg style="position:absolute;left:549px;top:149px;" width="10" height="7" viewBox="0 0 10 7"><path d="M1 1 L5 5 L9 1" stroke="#333" fill="none" stroke-width="1.4"/></svg>
<svg style="position:absolute;left:567px;top:144px;" width="16" height="16" viewBox="0 0 16 16"><circle cx="8" cy="8" r="7.5" fill="#5fd155" stroke="#2d7a4a" stroke-width="0.8"/><circle cx="6" cy="5" r="2.2" fill="url(#gOr)"/><circle cx="5.5" cy="10.5" r="2.5" fill="url(#gOr)"/><circle cx="11" cy="9" r="2.3" fill="url(#gOr)"/></svg>
<div class="t" style="left:588.40px;top:146px;letter-spacing:-0.325px;">Star_Quad</div>
<svg style="position:absolute;left:587px;top:164px;" width="16" height="16" viewBox="0 0 16 16"><circle cx="6.80" cy="1.00" r="1" fill="#2a4666"/><circle cx="9.20" cy="1.00" r="1" fill="#2a4666"/><circle cx="6.80" cy="3.00" r="1" fill="#2a4666"/><circle cx="9.20" cy="3.00" r="1" fill="#2a4666"/><circle cx="14.29" cy="4.70" r="1" fill="#2a4666"/><circle cx="15.03" cy="6.98" r="1" fill="#2a4666"/><circle cx="12.38" cy="5.31" r="1" fill="#2a4666"/><circle cx="13.13" cy="7.60" r="1" fill="#2a4666"/><circle cx="13.09" cy="12.96" r="1" fill="#2a4666"/><circle cx="11.14" cy="14.37" r="1" fill="#2a4666"/><circle cx="11.91" cy="11.34" r="1" fill="#2a4666"/><circle cx="9.97" cy="12.75" r="1" fill="#2a4666"/><circle cx="4.86" cy="14.37" r="1" fill="#2a4666"/><circle cx="2.91" cy="12.96" r="1" fill="#2a4666"/><circle cx="6.03" cy="12.75" r="1" fill="#2a4666"/><circle cx="4.09" cy="11.34" r="1" fill="#2a4666"/><circle cx="0.97" cy="6.98" r="1" fill="#2a4666"/><circle cx="1.71" cy="4.70" r="1" fill="#2a4666"/><circle cx="2.87" cy="7.60" r="1" fill="#2a4666"/><circle cx="3.62" cy="5.31" r="1" fill="#2a4666"/></svg>
<div class="t" style="left:608.70px;top:166px;letter-spacing:-0.367px;">Braided_Shield_for_Star_Quad</div>
<svg style="position:absolute;left:587px;top:184px;" width="16" height="16" viewBox="0 0 16 16"><circle cx="8" cy="8" r="7.5" fill="#5fd155" stroke="#2d5a5a" stroke-width="0.9"/><circle cx="8" cy="8" r="4.6" fill="url(#gOr)" stroke="#2d4a5a" stroke-width="0.7"/></svg>
<div class="t" style="left:608.70px;top:186px;letter-spacing:-0.338px;">Blue_Wire</div>
<svg style="position:absolute;left:587px;top:204px;" width="16" height="16" viewBox="0 0 16 16"><circle cx="8" cy="8" r="7.5" fill="#5fd155" stroke="#2d5a5a" stroke-width="0.9"/><circle cx="8" cy="8" r="4.6" fill="url(#gOr)" stroke="#2d4a5a" stroke-width="0.7"/></svg>
<div class="t" style="left:608.70px;top:206px;letter-spacing:-0.338px;">Blue_Wire</div>
<svg style="position:absolute;left:587px;top:224px;" width="16" height="16" viewBox="0 0 16 16"><circle cx="8" cy="8" r="7.5" fill="#5fd155" stroke="#2d5a5a" stroke-width="0.9"/><circle cx="8" cy="8" r="4.6" fill="url(#gOr)" stroke="#2d4a5a" stroke-width="0.7"/></svg>
<div class="t" style="left:609.70px;top:226px;letter-spacing:-0.328px;">White_Wire</div>
<svg style="position:absolute;left:587px;top:244px;" width="16" height="16" viewBox="0 0 16 16"><circle cx="8" cy="8" r="7.5" fill="#5fd155" stroke="#2d5a5a" stroke-width="0.9"/><circle cx="8" cy="8" r="4.6" fill="url(#gOr)" stroke="#2d4a5a" stroke-width="0.7"/></svg>
<div class="t" style="left:609.70px;top:246px;letter-spacing:-0.328px;">White_Wire</div>
<svg style="position:absolute;left:587px;top:264px;" width="16" height="16" viewBox="0 0 16 16"><circle cx="8" cy="8" r="7.5" fill="url(#gGr2)" stroke="#2d5a5a" stroke-width="0.9"/></svg>
<div class="t" style="left:608.70px;top:266px;letter-spacing:-0.200px;">Filler</div>
<svg style="position:absolute;left:587px;top:284px;" width="16" height="16" viewBox="0 0 16 16"><circle cx="8" cy="8" r="7.5" fill="url(#gGr2)" stroke="#2d5a5a" stroke-width="0.9"/></svg>
<div class="t" style="left:608.70px;top:286px;letter-spacing:-0.200px;">Filler</div>
<svg style="position:absolute;left:587px;top:304px;" width="16" height="16" viewBox="0 0 16 16"><circle cx="8" cy="8" r="7.5" fill="url(#gGr2)" stroke="#2d5a5a" stroke-width="0.9"/></svg>
<div class="t" style="left:608.70px;top:306px;letter-spacing:-0.200px;">Filler</div>
<svg style="position:absolute;left:587px;top:324px;" width="16" height="16" viewBox="0 0 16 16"><circle cx="8" cy="8" r="7.5" fill="url(#gGr2)" stroke="#2d5a5a" stroke-width="0.9"/></svg>
<div class="t" style="left:608.70px;top:326px;letter-spacing:-0.200px;">Filler</div>
<svg style="position:absolute;left:587px;top:344px;" width="16" height="16" viewBox="0 0 16 16"><circle cx="8" cy="8" r="7.5" fill="url(#gGr2)" stroke="#2d5a5a" stroke-width="0.9"/></svg>
<div class="t" style="left:608.70px;top:346px;letter-spacing:-0.200px;">Filler</div>
<div style="position:absolute;left:783px;top:100px;width:358px;height:396px;border:1px solid #dcdcdc;box-sizing:border-box"></div>
<div style="position:absolute;left:789px;top:92px;width:50px;height:16px;background:#f0f0f0"></div>
<div class="t" style="left:791.40px;top:94px;letter-spacing:-0.100px;">Settings</div>
<div class="t" style="left:819.70px;top:114px;letter-spacing:0.175px;">Name:</div>
<div style="position:absolute;left:861px;top:109px;width:122px;height:22px;background:#fff;border:1px solid #7a7a7a;box-sizing:border-box"></div>
<div class="t" style="left:863.70px;top:114px;letter-spacing:-0.400px;">Star_Quad</div>
<div style="position:absolute;left:989px;top:113px;width:13px;height:13px;background:#fff;border:1px solid #333;box-sizing:border-box"></div>
<div class="t" style="left:1006.30px;top:114px;letter-spacing:-0.073px;">Show Description</div>
<div style="position:absolute;left:790px;top:137px;width:344px;height:1px;background:#a0a0a0"></div>
<svg style="position:absolute;left:796px;top:152px;" width="18" height="18" viewBox="0 0 18 18"><path d="M6 4 Q6 0.7 9 0.7 Q12 0.7 12 4 L12 6 L14 6 Q17.3 6 17.3 9 Q17.3 12 14 12 L12 12 L12 14 Q12 17.3 9 17.3 Q6 17.3 6 14 L6 12 L4 12 Q0.7 12 0.7 9 Q0.7 6 4 6 L6 6 Z" fill="url(#gPlus)" stroke="#1e3050" stroke-width="1.1" stroke-linejoin="round"/></svg>
<svg style="position:absolute;left:822px;top:151px;" width="20" height="19" viewBox="0 0 20 19"><path d="M1 8 Q5 7.6 9.5 8.2" stroke="#808080" stroke-width="2.2" fill="none" stroke-linecap="round"/><path d="M18 3.5 Q11 5.5 8.5 10 Q6.5 13.5 5.4 17.5" stroke="#808080" stroke-width="2.6" fill="none" stroke-linecap="round"/><path d="M9 8.6 Q14 10.5 18.2 14.6" stroke="#808080" stroke-width="2.9" fill="none" stroke-linecap="round"/></svg>
<div style="position:absolute;left:790px;top:182px;width:342px;height:283px;border:1px solid #fff;box-sizing:border-box"></div>
<div style="position:absolute;left:792px;top:184px;width:338px;height:280px;background:#fff;border:1px solid #828790;box-sizing:border-box"></div>
<div style="position:absolute;left:793px;top:185px;width:320px;height:278px;overflow:hidden">
<div style="position:absolute;left:0px;top:0px;width:320px;height:19px;background:#fff"></div>
<div style="position:absolute;left:0px;top:19px;width:320px;height:1px;background:#e3e3e3"></div>
<div style="position:absolute;left:159px;top:0px;width:1px;height:20px;background:#e3e3e3"></div>
<svg style="position:absolute;left:5px;top:7px" width="10" height="7" viewBox="0 0 10 7"><path d="M1 1 L5 5 L9 1" stroke="#333" fill="none" stroke-width="1.4"/></svg>
<div class="t" style="left:22.40px;top:4px;letter-spacing:-0.180px;">Shield</div>
<div class="t" style="left:163.60px;top:4px;letter-spacing:-1.300px;">Yes</div>
<div style="position:absolute;left:0px;top:20px;width:320px;height:19px;background:#f5f5f5"></div>
<div style="position:absolute;left:0px;top:39px;width:320px;height:1px;background:#e3e3e3"></div>
<div style="position:absolute;left:159px;top:20px;width:1px;height:20px;background:#e3e3e3"></div>
<div class="t" style="left:42.40px;top:24px;letter-spacing:0.588px;">Model</div>
<div class="t" style="left:162.60px;top:24px;letter-spacing:-0.361px;">Braided_Shield_for_Star_Qu...</div>
<div style="position:absolute;left:0px;top:40px;width:320px;height:19px;background:#fff"></div>
<div style="position:absolute;left:0px;top:59px;width:320px;height:1px;background:#e3e3e3"></div>
<div style="position:absolute;left:159px;top:40px;width:1px;height:20px;background:#e3e3e3"></div>
<div class="t" style="left:42.40px;top:44px;letter-spacing:-0.255px;color:#8a8a8a;">Inner Radius</div>
<div class="t" style="left:162.60px;top:44px;letter-spacing:-0.050px;color:#8a8a8a;">1.97 mm</div>
<div style="position:absolute;left:0px;top:60px;width:320px;height:19px;background:#f5f5f5"></div>
<div style="position:absolute;left:0px;top:79px;width:320px;height:1px;background:#e3e3e3"></div>
<div style="position:absolute;left:159px;top:60px;width:1px;height:20px;background:#e3e3e3"></div>
<div class="t" style="left:42.40px;top:64px;letter-spacing:0.090px;">Filling Material</div>
<div class="t" style="left:163.60px;top:64px;letter-spacing:-0.240px;">Vacuum</div>
<div style="position:absolute;left:0px;top:80px;width:320px;height:19px;background:#fff"></div>
<div style="position:absolute;left:0px;top:99px;width:320px;height:1px;background:#e3e3e3"></div>
<div style="position:absolute;left:159px;top:80px;width:1px;height:20px;background:#e3e3e3"></div>
<svg style="position:absolute;left:25px;top:87px" width="10" height="7" viewBox="0 0 10 7"><path d="M1 1 L5 5 L9 1" stroke="#333" fill="none" stroke-width="1.4"/></svg>
<div class="t" style="left:42.40px;top:84px;letter-spacing:0.133px;">Filling Color</div>
<div class="t" style="left:162.60px;top:84px;letter-spacing:0.160px;">Custom</div>
<div style="position:absolute;left:0px;top:100px;width:320px;height:19px;background:#f5f5f5"></div>
<div style="position:absolute;left:0px;top:119px;width:320px;height:1px;background:#e3e3e3"></div>
<div style="position:absolute;left:159px;top:100px;width:1px;height:20px;background:#e3e3e3"></div>
<div class="t" style="left:62.40px;top:104px;letter-spacing:0.145px;">Custom Color</div>
<div style="position:absolute;left:163px;top:102px;width:16px;height:16px;background:#e7e7e7"></div>
<div class="t" style="left:184.50px;top:104px;letter-spacing:-0.425px;">[231, 231, 231] (255)</div>
<div style="position:absolute;left:0px;top:120px;width:320px;height:19px;background:#fff"></div>
<div style="position:absolute;left:0px;top:139px;width:320px;height:1px;background:#e3e3e3"></div>
<div style="position:absolute;left:159px;top:120px;width:1px;height:20px;background:#e3e3e3"></div>
<div class="t" style="left:42.40px;top:124px;letter-spacing:-0.059px;">Shield Color</div>
<div class="t" style="left:162.60px;top:124px;letter-spacing:-0.120px;">From Shield</div>
<div style="position:absolute;left:0px;top:140px;width:320px;height:19px;background:#f5f5f5"></div>
<div style="position:absolute;left:0px;top:159px;width:320px;height:1px;background:#e3e3e3"></div>
<div style="position:absolute;left:159px;top:140px;width:1px;height:20px;background:#e3e3e3"></div>
<div class="t" style="left:42.40px;top:144px;letter-spacing:0.175px;">Net</div>
<div style="position:absolute;left:0px;top:160px;width:320px;height:19px;background:#fff"></div>
<div style="position:absolute;left:0px;top:179px;width:320px;height:1px;background:#e3e3e3"></div>
<div style="position:absolute;left:159px;top:160px;width:1px;height:20px;background:#e3e3e3"></div>
<svg style="position:absolute;left:5px;top:167px" width="10" height="7" viewBox="0 0 10 7"><path d="M1 1 L5 5 L9 1" stroke="#333" fill="none" stroke-width="1.4"/></svg>
<div class="t" style="left:23.40px;top:164px;letter-spacing:-0.010px;">Outer Insulation</div>
<div class="t" style="left:163.60px;top:164px;letter-spacing:-1.300px;">Yes</div>
<div style="position:absolute;left:0px;top:180px;width:320px;height:19px;background:#f5f5f5"></div>
<div style="position:absolute;left:0px;top:199px;width:320px;height:1px;background:#e3e3e3"></div>
<div style="position:absolute;left:159px;top:180px;width:1px;height:20px;background:#e3e3e3"></div>
<div class="t" style="left:42.40px;top:184px;letter-spacing:0.193px;">Material</div>
<div class="t" style="left:162.60px;top:184px;letter-spacing:-0.700px;">PVC</div>
<div style="position:absolute;left:0px;top:200px;width:320px;height:19px;background:#fff"></div>
<div style="position:absolute;left:0px;top:219px;width:320px;height:1px;background:#e3e3e3"></div>
<div style="position:absolute;left:159px;top:200px;width:1px;height:20px;background:#e3e3e3"></div>
<div class="t" style="left:42.40px;top:204px;letter-spacing:0.043px;">Definition Type</div>
<div class="t" style="left:163.60px;top:204px;letter-spacing:-0.255px;">Outer Radius</div>
<div style="position:absolute;left:0px;top:220px;width:320px;height:19px;background:#f5f5f5"></div>
<div style="position:absolute;left:0px;top:239px;width:320px;height:1px;background:#e3e3e3"></div>
<div style="position:absolute;left:159px;top:220px;width:1px;height:20px;background:#e3e3e3"></div>
<div class="t" style="left:43.40px;top:224px;letter-spacing:-0.241px;">Outer Radius</div>
<div class="t" style="left:162.60px;top:224px;letter-spacing:0.200px;">2.4 mm</div>
<div style="position:absolute;left:0px;top:240px;width:320px;height:19px;background:#fff"></div>
<div style="position:absolute;left:0px;top:259px;width:320px;height:1px;background:#e3e3e3"></div>
<div style="position:absolute;left:159px;top:240px;width:1px;height:20px;background:#e3e3e3"></div>
<svg style="position:absolute;left:25px;top:247px" width="10" height="7" viewBox="0 0 10 7"><path d="M1 1 L5 5 L9 1" stroke="#333" fill="none" stroke-width="1.4"/></svg>
<div class="t" style="left:42.40px;top:244px;letter-spacing:0.150px;">Color</div>
<div class="t" style="left:162.60px;top:244px;letter-spacing:0.160px;">Custom</div>
<div style="position:absolute;left:0px;top:260px;width:320px;height:19px;background:#f5f5f5"></div>
<div style="position:absolute;left:0px;top:279px;width:320px;height:1px;background:#e3e3e3"></div>
<div style="position:absolute;left:159px;top:260px;width:1px;height:20px;background:#e3e3e3"></div>
<div class="t" style="left:62.40px;top:264px;letter-spacing:0.145px;">Custom Color</div>
<div style="position:absolute;left:163px;top:262px;width:16px;height:16px;background:#00916a"></div>
<div class="t" style="left:184.50px;top:264px;letter-spacing:-0.361px;">[0, 145, 106] (255)</div>
</div>
<div style="position:absolute;left:1113px;top:185px;width:16px;height:278px;background:#f0f0f0"></div>
<div style="position:absolute;left:1113px;top:202px;width:15px;height:185px;background:#cdcdcd"></div>
<svg style="position:absolute;left:1116px;top:191px;" width="9" height="6" viewBox="0 0 9 6"><path d="M0.8 5 L4.5 1.5 L8.2 5" stroke="#606060" fill="none" stroke-width="1.6"/></svg>
<svg style="position:absolute;left:1116px;top:451px;" width="9" height="6" viewBox="0 0 9 6"><path d="M0.8 1 L4.5 4.5 L8.2 1" stroke="#606060" fill="none" stroke-width="1.6"/></svg>
<div style="position:absolute;left:790px;top:464px;width:79px;height:26px;background:#fff;border:1px solid #dcdcdc;border-top:none;box-sizing:border-box"></div>
<div style="position:absolute;left:868px;top:466px;width:86px;height:22px;border-bottom:1px solid #dcdcdc;border-top:1px solid #dcdcdc;border-left:1px solid #dcdcdc;box-sizing:border-box"></div>
<div class="t" style="left:801.70px;top:472px;letter-spacing:-0.078px;">Properties</div>
<div class="t" style="left:878.20px;top:471px;letter-spacing:-0.223px;">Inner Cables</div>
<div style="position:absolute;left:783px;top:510px;width:358px;height:272px;border:1px solid #dcdcdc;box-sizing:border-box"></div>
<div style="position:absolute;left:789px;top:502px;width:62px;height:16px;background:#f0f0f0"></div>
<div class="t" style="left:791.80px;top:504px;letter-spacing:-0.450px;">Cross View</div>
<div style="position:absolute;left:784px;top:519px;width:356px;height:263px;overflow:hidden"><svg width="356" height="263" viewBox="0 0 356 263" shape-rendering="crispEdges"><rect x="0.5" y="0.5" width="355" height="262" fill="#fff" stroke="#828790"/><rect x="17" y="1" width="1" height="261" fill="#dadaff"/><rect x="44" y="1" width="1" height="261" fill="#dadaff"/><rect x="70" y="1" width="1" height="261" fill="#dadaff"/><rect x="1" y="238" width="354" height="1" fill="#dadaff"/><rect x="97" y="1" width="1" height="261" fill="#dadaff"/><rect x="1" y="211" width="354" height="1" fill="#dadaff"/><rect x="124" y="1" width="1" height="261" fill="#dadaff"/><rect x="1" y="184" width="354" height="1" fill="#dadaff"/><rect x="151" y="1" width="1" height="261" fill="#dadaff"/><rect x="1" y="157" width="354" height="1" fill="#dadaff"/><rect x="178" y="1" width="1" height="261" fill="#dadaff"/><rect x="1" y="131" width="354" height="1" fill="#dadaff"/><rect x="204" y="1" width="1" height="261" fill="#dadaff"/><rect x="1" y="104" width="354" height="1" fill="#dadaff"/><rect x="231" y="1" width="1" height="261" fill="#dadaff"/><rect x="1" y="77" width="354" height="1" fill="#dadaff"/><rect x="258" y="1" width="1" height="261" fill="#dadaff"/><rect x="1" y="50" width="354" height="1" fill="#dadaff"/><rect x="285" y="1" width="1" height="261" fill="#dadaff"/><rect x="1" y="23" width="354" height="1" fill="#dadaff"/><rect x="311" y="1" width="1" height="261" fill="#dadaff"/><rect x="338" y="1" width="1" height="261" fill="#dadaff"/><circle cx="178.0" cy="131.04999999999995" r="128.02" fill="#00916a" stroke="#000" stroke-width="1"/><circle cx="178.0" cy="131.04999999999995" r="116.3" fill="#fff" stroke="#000" stroke-width="1"/><circle cx="241.41" cy="43.13" r="2.85" fill="#eeac22" stroke="#000" stroke-width="0.9"/><circle cx="236.37" cy="39.71" r="2.85" fill="#eeac22" stroke="#000" stroke-width="0.9"/><circle cx="231.15" cy="36.57" r="2.85" fill="#eeac22" stroke="#000" stroke-width="0.9"/><circle cx="225.76" cy="33.74" r="2.85" fill="#eeac22" stroke="#000" stroke-width="0.9"/><circle cx="220.22" cy="31.21" r="2.85" fill="#eeac22" stroke="#000" stroke-width="0.9"/><circle cx="214.54" cy="28.99" r="2.85" fill="#eeac22" stroke="#000" stroke-width="0.9"/><circle cx="208.75" cy="27.10" r="2.85" fill="#eeac22" stroke="#000" stroke-width="0.9"/><circle cx="202.86" cy="25.54" r="2.85" fill="#eeac22" stroke="#000" stroke-width="0.9"/><circle cx="196.90" cy="24.31" r="2.85" fill="#eeac22" stroke="#000" stroke-width="0.9"/><circle cx="190.87" cy="23.42" r="2.85" fill="#eeac22" stroke="#000" stroke-width="0.9"/><circle cx="184.81" cy="22.86" r="2.85" fill="#eeac22" stroke="#000" stroke-width="0.9"/><circle cx="178.72" cy="22.65" r="2.85" fill="#eeac22" stroke="#000" stroke-width="0.9"/><circle cx="244.57" cy="38.75" r="2.85" fill="#eeac22" stroke="#000" stroke-width="0.9"/><circle cx="239.28" cy="35.16" r="2.85" fill="#eeac22" stroke="#000" stroke-width="0.9"/><circle cx="233.80" cy="31.87" r="2.85" fill="#eeac22" stroke="#000" stroke-width="0.9"/><circle cx="228.14" cy="28.89" r="2.85" fill="#eeac22" stroke="#000" stroke-width="0.9"/><circle cx="222.32" cy="26.23" r="2.85" fill="#eeac22" stroke="#000" stroke-width="0.9"/><circle cx="216.36" cy="23.91" r="2.85" fill="#eeac22" stroke="#000" stroke-width="0.9"/><circle cx="210.28" cy="21.93" r="2.85" fill="#eeac22" stroke="#000" stroke-width="0.9"/><circle cx="204.10" cy="20.28" r="2.85" fill="#eeac22" stroke="#000" stroke-width="0.9"/><circle cx="197.84" cy="18.99" r="2.85" fill="#eeac22" stroke="#000" stroke-width="0.9"/><circle cx="191.51" cy="18.06" r="2.85" fill="#eeac22" stroke="#000" stroke-width="0.9"/><circle cx="185.15" cy="17.47" r="2.85" fill="#eeac22" stroke="#000" stroke-width="0.9"/><circle cx="178.75" cy="17.25" r="2.85" fill="#eeac22" stroke="#000" stroke-width="0.9"/><circle cx="148.80" cy="26.66" r="2.85" fill="#eeac22" stroke="#000" stroke-width="0.9"/><circle cx="142.98" cy="28.46" r="2.85" fill="#eeac22" stroke="#000" stroke-width="0.9"/><circle cx="137.27" cy="30.59" r="2.85" fill="#eeac22" stroke="#000" stroke-width="0.9"/><circle cx="131.69" cy="33.04" r="2.85" fill="#eeac22" stroke="#000" stroke-width="0.9"/><circle cx="126.26" cy="35.79" r="2.85" fill="#eeac22" stroke="#000" stroke-width="0.9"/><circle cx="120.99" cy="38.85" r="2.85" fill="#eeac22" stroke="#000" stroke-width="0.9"/><circle cx="115.90" cy="42.20" r="2.85" fill="#eeac22" stroke="#000" stroke-width="0.9"/><circle cx="111.01" cy="45.83" r="2.85" fill="#eeac22" stroke="#000" stroke-width="0.9"/><circle cx="106.33" cy="49.72" r="2.85" fill="#eeac22" stroke="#000" stroke-width="0.9"/><circle cx="101.88" cy="53.88" r="2.85" fill="#eeac22" stroke="#000" stroke-width="0.9"/><circle cx="97.66" cy="58.28" r="2.85" fill="#eeac22" stroke="#000" stroke-width="0.9"/><circle cx="93.70" cy="62.90" r="2.85" fill="#eeac22" stroke="#000" stroke-width="0.9"/><circle cx="147.34" cy="21.46" r="2.85" fill="#eeac22" stroke="#000" stroke-width="0.9"/><circle cx="141.23" cy="23.35" r="2.85" fill="#eeac22" stroke="#000" stroke-width="0.9"/><circle cx="135.24" cy="25.59" r="2.85" fill="#eeac22" stroke="#000" stroke-width="0.9"/><circle cx="129.39" cy="28.16" r="2.85" fill="#eeac22" stroke="#000" stroke-width="0.9"/><circle cx="123.68" cy="31.05" r="2.85" fill="#eeac22" stroke="#000" stroke-width="0.9"/><circle cx="118.15" cy="34.26" r="2.85" fill="#eeac22" stroke="#000" stroke-width="0.9"/><circle cx="112.81" cy="37.77" r="2.85" fill="#eeac22" stroke="#000" stroke-width="0.9"/><circle cx="107.67" cy="41.58" r="2.85" fill="#eeac22" stroke="#000" stroke-width="0.9"/><circle cx="102.76" cy="45.67" r="2.85" fill="#eeac22" stroke="#000" stroke-width="0.9"/><circle cx="98.08" cy="50.03" r="2.85" fill="#eeac22" stroke="#000" stroke-width="0.9"/><circle cx="93.66" cy="54.65" r="2.85" fill="#eeac22" stroke="#000" stroke-width="0.9"/><circle cx="89.50" cy="59.51" r="2.85" fill="#eeac22" stroke="#000" stroke-width="0.9"/><circle cx="78.18" cy="88.79" r="2.85" fill="#eeac22" stroke="#000" stroke-width="0.9"/><circle cx="75.96" cy="94.47" r="2.85" fill="#eeac22" stroke="#000" stroke-width="0.9"/><circle cx="74.07" cy="100.26" r="2.85" fill="#eeac22" stroke="#000" stroke-width="0.9"/><circle cx="72.50" cy="106.14" r="2.85" fill="#eeac22" stroke="#000" stroke-width="0.9"/><circle cx="71.27" cy="112.11" r="2.85" fill="#eeac22" stroke="#000" stroke-width="0.9"/><circle cx="70.37" cy="118.13" r="2.85" fill="#eeac22" stroke="#000" stroke-width="0.9"/><circle cx="69.82" cy="124.20" r="2.85" fill="#eeac22" stroke="#000" stroke-width="0.9"/><circle cx="69.60" cy="130.29" r="2.85" fill="#eeac22" stroke="#000" stroke-width="0.9"/><circle cx="69.73" cy="136.38" r="2.85" fill="#eeac22" stroke="#000" stroke-width="0.9"/><circle cx="70.20" cy="142.45" r="2.85" fill="#eeac22" stroke="#000" stroke-width="0.9"/><circle cx="71.01" cy="148.49" r="2.85" fill="#eeac22" stroke="#000" stroke-width="0.9"/><circle cx="72.16" cy="154.47" r="2.85" fill="#eeac22" stroke="#000" stroke-width="0.9"/><circle cx="73.20" cy="86.69" r="2.85" fill="#eeac22" stroke="#000" stroke-width="0.9"/><circle cx="70.88" cy="92.65" r="2.85" fill="#eeac22" stroke="#000" stroke-width="0.9"/><circle cx="68.89" cy="98.72" r="2.85" fill="#eeac22" stroke="#000" stroke-width="0.9"/><circle cx="67.24" cy="104.90" r="2.85" fill="#eeac22" stroke="#000" stroke-width="0.9"/><circle cx="65.95" cy="111.17" r="2.85" fill="#eeac22" stroke="#000" stroke-width="0.9"/><circle cx="65.01" cy="117.49" r="2.85" fill="#eeac22" stroke="#000" stroke-width="0.9"/><circle cx="64.43" cy="123.86" r="2.85" fill="#eeac22" stroke="#000" stroke-width="0.9"/><circle cx="64.20" cy="130.25" r="2.85" fill="#eeac22" stroke="#000" stroke-width="0.9"/><circle cx="64.34" cy="136.64" r="2.85" fill="#eeac22" stroke="#000" stroke-width="0.9"/><circle cx="64.83" cy="143.02" r="2.85" fill="#eeac22" stroke="#000" stroke-width="0.9"/><circle cx="65.68" cy="149.36" r="2.85" fill="#eeac22" stroke="#000" stroke-width="0.9"/><circle cx="66.89" cy="155.64" r="2.85" fill="#eeac22" stroke="#000" stroke-width="0.9"/><circle cx="82.72" cy="182.75" r="2.85" fill="#eeac22" stroke="#000" stroke-width="0.9"/><circle cx="85.78" cy="188.02" r="2.85" fill="#eeac22" stroke="#000" stroke-width="0.9"/><circle cx="89.12" cy="193.11" r="2.85" fill="#eeac22" stroke="#000" stroke-width="0.9"/><circle cx="92.75" cy="198.00" r="2.85" fill="#eeac22" stroke="#000" stroke-width="0.9"/><circle cx="96.65" cy="202.69" r="2.85" fill="#eeac22" stroke="#000" stroke-width="0.9"/><circle cx="100.80" cy="207.14" r="2.85" fill="#eeac22" stroke="#000" stroke-width="0.9"/><circle cx="105.19" cy="211.36" r="2.85" fill="#eeac22" stroke="#000" stroke-width="0.9"/><circle cx="109.82" cy="215.32" r="2.85" fill="#eeac22" stroke="#000" stroke-width="0.9"/><circle cx="114.66" cy="219.02" r="2.85" fill="#eeac22" stroke="#000" stroke-width="0.9"/><circle cx="119.70" cy="222.44" r="2.85" fill="#eeac22" stroke="#000" stroke-width="0.9"/><circle cx="124.93" cy="225.57" r="2.85" fill="#eeac22" stroke="#000" stroke-width="0.9"/><circle cx="130.32" cy="228.40" r="2.85" fill="#eeac22" stroke="#000" stroke-width="0.9"/><circle cx="77.98" cy="185.33" r="2.85" fill="#eeac22" stroke="#000" stroke-width="0.9"/><circle cx="81.18" cy="190.86" r="2.85" fill="#eeac22" stroke="#000" stroke-width="0.9"/><circle cx="84.70" cy="196.20" r="2.85" fill="#eeac22" stroke="#000" stroke-width="0.9"/><circle cx="88.50" cy="201.34" r="2.85" fill="#eeac22" stroke="#000" stroke-width="0.9"/><circle cx="92.59" cy="206.26" r="2.85" fill="#eeac22" stroke="#000" stroke-width="0.9"/><circle cx="96.95" cy="210.93" r="2.85" fill="#eeac22" stroke="#000" stroke-width="0.9"/><circle cx="101.57" cy="215.36" r="2.85" fill="#eeac22" stroke="#000" stroke-width="0.9"/><circle cx="106.42" cy="219.52" r="2.85" fill="#eeac22" stroke="#000" stroke-width="0.9"/><circle cx="111.51" cy="223.40" r="2.85" fill="#eeac22" stroke="#000" stroke-width="0.9"/><circle cx="116.80" cy="226.99" r="2.85" fill="#eeac22" stroke="#000" stroke-width="0.9"/><circle cx="122.28" cy="230.28" r="2.85" fill="#eeac22" stroke="#000" stroke-width="0.9"/><circle cx="127.95" cy="233.25" r="2.85" fill="#eeac22" stroke="#000" stroke-width="0.9"/><circle cx="159.02" cy="237.77" r="2.85" fill="#eeac22" stroke="#000" stroke-width="0.9"/><circle cx="165.04" cy="238.67" r="2.85" fill="#eeac22" stroke="#000" stroke-width="0.9"/><circle cx="171.11" cy="239.23" r="2.85" fill="#eeac22" stroke="#000" stroke-width="0.9"/><circle cx="177.19" cy="239.45" r="2.85" fill="#eeac22" stroke="#000" stroke-width="0.9"/><circle cx="183.28" cy="239.32" r="2.85" fill="#eeac22" stroke="#000" stroke-width="0.9"/><circle cx="189.36" cy="238.85" r="2.85" fill="#eeac22" stroke="#000" stroke-width="0.9"/><circle cx="195.40" cy="238.05" r="2.85" fill="#eeac22" stroke="#000" stroke-width="0.9"/><circle cx="201.38" cy="236.90" r="2.85" fill="#eeac22" stroke="#000" stroke-width="0.9"/><circle cx="207.29" cy="235.42" r="2.85" fill="#eeac22" stroke="#000" stroke-width="0.9"/><circle cx="213.10" cy="233.61" r="2.85" fill="#eeac22" stroke="#000" stroke-width="0.9"/><circle cx="218.81" cy="231.48" r="2.85" fill="#eeac22" stroke="#000" stroke-width="0.9"/><circle cx="224.38" cy="229.02" r="2.85" fill="#eeac22" stroke="#000" stroke-width="0.9"/><circle cx="158.07" cy="243.09" r="2.85" fill="#eeac22" stroke="#000" stroke-width="0.9"/><circle cx="164.40" cy="244.03" r="2.85" fill="#eeac22" stroke="#000" stroke-width="0.9"/><circle cx="170.76" cy="244.62" r="2.85" fill="#eeac22" stroke="#000" stroke-width="0.9"/><circle cx="177.15" cy="244.85" r="2.85" fill="#eeac22" stroke="#000" stroke-width="0.9"/><circle cx="183.55" cy="244.71" r="2.85" fill="#eeac22" stroke="#000" stroke-width="0.9"/><circle cx="189.92" cy="244.22" r="2.85" fill="#eeac22" stroke="#000" stroke-width="0.9"/><circle cx="196.26" cy="243.38" r="2.85" fill="#eeac22" stroke="#000" stroke-width="0.9"/><circle cx="202.54" cy="242.17" r="2.85" fill="#eeac22" stroke="#000" stroke-width="0.9"/><circle cx="208.75" cy="240.62" r="2.85" fill="#eeac22" stroke="#000" stroke-width="0.9"/><circle cx="214.85" cy="238.72" r="2.85" fill="#eeac22" stroke="#000" stroke-width="0.9"/><circle cx="220.84" cy="236.48" r="2.85" fill="#eeac22" stroke="#000" stroke-width="0.9"/><circle cx="226.69" cy="233.91" r="2.85" fill="#eeac22" stroke="#000" stroke-width="0.9"/><circle cx="249.61" cy="212.43" r="2.85" fill="#eeac22" stroke="#000" stroke-width="0.9"/><circle cx="254.06" cy="208.28" r="2.85" fill="#eeac22" stroke="#000" stroke-width="0.9"/><circle cx="258.28" cy="203.89" r="2.85" fill="#eeac22" stroke="#000" stroke-width="0.9"/><circle cx="262.25" cy="199.26" r="2.85" fill="#eeac22" stroke="#000" stroke-width="0.9"/><circle cx="265.94" cy="194.42" r="2.85" fill="#eeac22" stroke="#000" stroke-width="0.9"/><circle cx="269.37" cy="189.38" r="2.85" fill="#eeac22" stroke="#000" stroke-width="0.9"/><circle cx="272.50" cy="184.16" r="2.85" fill="#eeac22" stroke="#000" stroke-width="0.9"/><circle cx="275.33" cy="178.77" r="2.85" fill="#eeac22" stroke="#000" stroke-width="0.9"/><circle cx="277.86" cy="173.23" r="2.85" fill="#eeac22" stroke="#000" stroke-width="0.9"/><circle cx="280.07" cy="167.55" r="2.85" fill="#eeac22" stroke="#000" stroke-width="0.9"/><circle cx="281.96" cy="161.76" r="2.85" fill="#eeac22" stroke="#000" stroke-width="0.9"/><circle cx="283.52" cy="155.87" r="2.85" fill="#eeac22" stroke="#000" stroke-width="0.9"/><circle cx="253.17" cy="216.49" r="2.85" fill="#eeac22" stroke="#000" stroke-width="0.9"/><circle cx="257.85" cy="212.13" r="2.85" fill="#eeac22" stroke="#000" stroke-width="0.9"/><circle cx="262.28" cy="207.52" r="2.85" fill="#eeac22" stroke="#000" stroke-width="0.9"/><circle cx="266.44" cy="202.66" r="2.85" fill="#eeac22" stroke="#000" stroke-width="0.9"/><circle cx="270.33" cy="197.58" r="2.85" fill="#eeac22" stroke="#000" stroke-width="0.9"/><circle cx="273.92" cy="192.29" r="2.85" fill="#eeac22" stroke="#000" stroke-width="0.9"/><circle cx="277.21" cy="186.81" r="2.85" fill="#eeac22" stroke="#000" stroke-width="0.9"/><circle cx="280.18" cy="181.15" r="2.85" fill="#eeac22" stroke="#000" stroke-width="0.9"/><circle cx="282.83" cy="175.33" r="2.85" fill="#eeac22" stroke="#000" stroke-width="0.9"/><circle cx="285.15" cy="169.37" r="2.85" fill="#eeac22" stroke="#000" stroke-width="0.9"/><circle cx="287.14" cy="163.29" r="2.85" fill="#eeac22" stroke="#000" stroke-width="0.9"/><circle cx="288.78" cy="157.11" r="2.85" fill="#eeac22" stroke="#000" stroke-width="0.9"/><circle cx="286.27" cy="125.81" r="2.85" fill="#eeac22" stroke="#000" stroke-width="0.9"/><circle cx="285.81" cy="119.74" r="2.85" fill="#eeac22" stroke="#000" stroke-width="0.9"/><circle cx="285.00" cy="113.70" r="2.85" fill="#eeac22" stroke="#000" stroke-width="0.9"/><circle cx="283.86" cy="107.71" r="2.85" fill="#eeac22" stroke="#000" stroke-width="0.9"/><circle cx="282.38" cy="101.81" r="2.85" fill="#eeac22" stroke="#000" stroke-width="0.9"/><circle cx="280.57" cy="95.99" r="2.85" fill="#eeac22" stroke="#000" stroke-width="0.9"/><circle cx="278.44" cy="90.28" r="2.85" fill="#eeac22" stroke="#000" stroke-width="0.9"/><circle cx="275.99" cy="84.70" r="2.85" fill="#eeac22" stroke="#000" stroke-width="0.9"/><circle cx="273.24" cy="79.27" r="2.85" fill="#eeac22" stroke="#000" stroke-width="0.9"/><circle cx="270.18" cy="74.01" r="2.85" fill="#eeac22" stroke="#000" stroke-width="0.9"/><circle cx="266.83" cy="68.92" r="2.85" fill="#eeac22" stroke="#000" stroke-width="0.9"/><circle cx="263.20" cy="64.03" r="2.85" fill="#eeac22" stroke="#000" stroke-width="0.9"/><circle cx="291.67" cy="125.55" r="2.85" fill="#eeac22" stroke="#000" stroke-width="0.9"/><circle cx="291.18" cy="119.17" r="2.85" fill="#eeac22" stroke="#000" stroke-width="0.9"/><circle cx="290.33" cy="112.83" r="2.85" fill="#eeac22" stroke="#000" stroke-width="0.9"/><circle cx="289.13" cy="106.55" r="2.85" fill="#eeac22" stroke="#000" stroke-width="0.9"/><circle cx="287.58" cy="100.35" r="2.85" fill="#eeac22" stroke="#000" stroke-width="0.9"/><circle cx="285.68" cy="94.24" r="2.85" fill="#eeac22" stroke="#000" stroke-width="0.9"/><circle cx="283.45" cy="88.25" r="2.85" fill="#eeac22" stroke="#000" stroke-width="0.9"/><circle cx="280.87" cy="82.40" r="2.85" fill="#eeac22" stroke="#000" stroke-width="0.9"/><circle cx="277.98" cy="76.69" r="2.85" fill="#eeac22" stroke="#000" stroke-width="0.9"/><circle cx="274.77" cy="71.16" r="2.85" fill="#eeac22" stroke="#000" stroke-width="0.9"/><circle cx="271.25" cy="65.82" r="2.85" fill="#eeac22" stroke="#000" stroke-width="0.9"/><circle cx="267.44" cy="60.69" r="2.85" fill="#eeac22" stroke="#000" stroke-width="0.9"/><circle cx="178.0" cy="131.04999999999995" r="105.50" fill="#e7e7e7" stroke="#000" stroke-width="1"/><circle cx="116.5" cy="69.54999999999995" r="16.5" fill="#dcb0e6" stroke="#000" stroke-width="1"/><circle cx="239.5" cy="69.54999999999995" r="16.5" fill="#dcb0e6" stroke="#000" stroke-width="1"/><circle cx="116.5" cy="192.54999999999995" r="16.5" fill="#dcb0e6" stroke="#000" stroke-width="1"/><circle cx="239.5" cy="192.54999999999995" r="16.5" fill="#dcb0e6" stroke="#000" stroke-width="1"/><circle cx="178.0" cy="131.04999999999995" r="16.5" fill="#dcb0e6" stroke="#000" stroke-width="1"/><circle cx="178.0" cy="69.54999999999995" r="43.3" fill="#fff" stroke="#000" stroke-width="1"/><circle cx="178.0" cy="69.54999999999995" r="32.3" fill="#eeac22" stroke="#000" stroke-width="1"/><circle cx="178.0" cy="192.54999999999995" r="43.3" fill="#fff" stroke="#000" stroke-width="1"/><circle cx="178.0" cy="192.54999999999995" r="32.3" fill="#eeac22" stroke="#000" stroke-width="1"/><circle cx="116.5" cy="131.04999999999995" r="43.3" fill="#0000ff" stroke="#000" stroke-width="1"/><circle cx="116.5" cy="131.04999999999995" r="32.3" fill="#eeac22" stroke="#000" stroke-width="1"/><circle cx="239.5" cy="131.04999999999995" r="43.3" fill="#0000ff" stroke="#000" stroke-width="1"/><circle cx="239.5" cy="131.04999999999995" r="32.3" fill="#eeac22" stroke="#000" stroke-width="1"/></svg><div class="t" style="left:1.40px;top:12px;letter-spacing:0.000px;color:#858585">2</div><div class="t" style="left:1.40px;top:39px;letter-spacing:-0.550px;color:#858585">1.5</div><div class="t" style="left:1.40px;top:66px;letter-spacing:0.000px;color:#858585">1</div><div class="t" style="left:2.40px;top:93px;letter-spacing:-1.000px;color:#858585">0.5</div><div class="t" style="left:2.40px;top:120px;letter-spacing:0.000px;color:#858585">0</div><div class="t" style="left:2.40px;top:146px;letter-spacing:-0.367px;color:#858585">-0.5</div><div class="t" style="left:2.40px;top:173px;letter-spacing:-0.600px;color:#858585">-1</div><div class="t" style="left:2.40px;top:200px;letter-spacing:-0.367px;color:#858585">-1.5</div><div class="t" style="left:2.40px;top:227px;letter-spacing:-0.500px;color:#858585">-2</div><div class="t" style="left:-9.20px;top:251px;letter-spacing:-0.333px;color:#858585">-3.5</div><div class="t" style="left:17.80px;top:251px;letter-spacing:-0.500px;color:#858585">-3</div><div class="t" style="left:44.80px;top:251px;letter-spacing:-0.433px;color:#858585">-2.5</div><div class="t" style="left:70.80px;top:251px;letter-spacing:-0.500px;color:#858585">-2</div><div class="t" style="left:97.80px;top:251px;letter-spacing:-0.367px;color:#858585">-1.5</div><div class="t" style="left:124.80px;top:251px;letter-spacing:-0.600px;color:#858585">-1</div><div class="t" style="left:151.80px;top:251px;letter-spacing:-0.367px;color:#858585">-0.5</div><div class="t" style="left:178.80px;top:251px;letter-spacing:0.000px;color:#858585">0</div><div class="t" style="left:204.80px;top:251px;letter-spacing:-1.000px;color:#858585">0.5</div><div class="t" style="left:230.80px;top:251px;letter-spacing:0.000px;color:#858585">1</div><div class="t" style="left:257.80px;top:251px;letter-spacing:-0.550px;color:#858585">1.5</div><div class="t" style="left:284.80px;top:251px;letter-spacing:0.000px;color:#858585">2</div><div class="t" style="left:310.80px;top:251px;letter-spacing:-0.575px;color:#858585">2.5</div><div class="t" style="left:337.80px;top:251px;letter-spacing:0.000px;color:#858585">3</div></div>
<div style="position:absolute;left:1067px;top:790px;width:73px;height:22px;background:#e1e1e1;border:1px solid #adadad;box-sizing:border-box"></div>
<div class="t" style="left:1088.80px;top:795px;letter-spacing:-0.200px;">Close</div>
</body></html>
